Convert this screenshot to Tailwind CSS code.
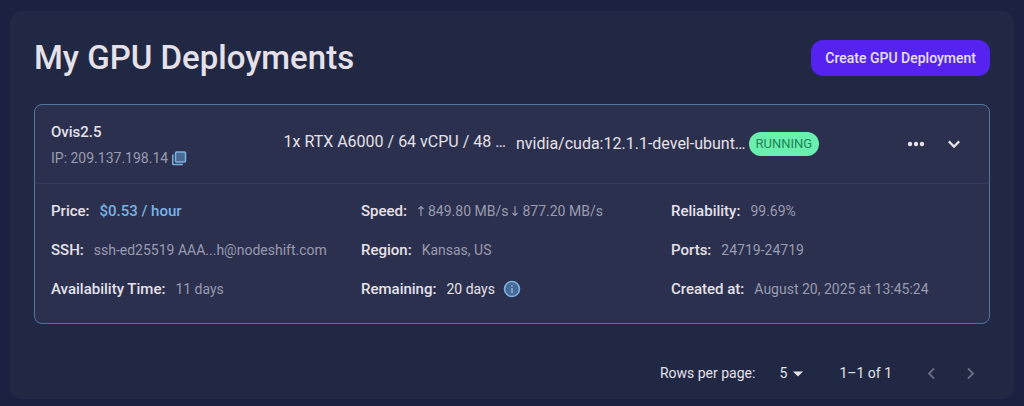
<!DOCTYPE html>
<html lang="en">
<head>
    <meta charset="UTF-8">
    <meta name="viewport" content="width=device-width, initial-scale=1.0">
    <title>My GPU Deployments</title>
    <script src="https://cdn.jsdelivr.net/npm/@tailwindcss/browser@4"></script>
</head>
<body class="min-h-screen bg-[#1b2140] px-[10px] pt-[11px] pb-[7px] font-['Roboto',sans-serif] text-[#e6e1e9]">
    <main class="rounded-xl bg-[#212843] px-6 pt-[29px] pb-[6px]">
        <header class="flex items-center justify-between">
            <h1 class="text-[33px] leading-9 font-medium">My GPU Deployments</h1>
            <button type="button" class="h-9 rounded-xl bg-[#5522f0] px-[14px] text-[14px] font-medium">Create GPU Deployment</button>
        </header>

        <section class="mt-7 rounded-lg border border-[#52759f] bg-[#2a304e]">
            <div class="grid grid-cols-4 items-center gap-2 border-b border-[#373d5d] px-4 py-[13px]">
                <div>
                    <h2 class="text-[15px] leading-7 font-medium">Ovis2.5</h2>
                    <p class="flex items-center gap-0.5 text-[14px] leading-6 text-[#9a9bb0]">
                        IP: 209.137.198.14
                        <button type="button" aria-label="Copy IP address">
                            <svg class="size-[18px]" viewBox="0 0 18 18" fill="none" stroke="#7ab3e3" stroke-width="1.5">
                                <rect x="5.5" y="3" width="10" height="10" rx="1" fill="#4b6a93"/>
                                <path d="M2.8 5.5v9.2q0 .8.8.8H13"/>
                            </svg>
                        </button>
                    </p>
                </div>
                <p class="pb-1 text-[16px] whitespace-nowrap">1x RTX A6000 / 64 vCPU / 48 …</p>
                <p class="text-[16px] whitespace-nowrap">nvidia/cuda:12.1.1-devel-ubunt…</p>
                <div class="flex items-center justify-between">
                    <span class="rounded-full bg-[#69f0ae] px-[7px] text-[13px] leading-6 text-[#218456]">RUNNING</span>
                    <div class="flex items-center">
                        <button type="button" aria-label="More actions" class="p-2">
                            <svg class="size-[22px]" viewBox="0 0 22 22" fill="currentColor">
                                <circle cx="5" cy="11" r="2.2"/>
                                <circle cx="11" cy="11" r="2.2"/>
                                <circle cx="17" cy="11" r="2.2"/>
                            </svg>
                        </button>
                        <button type="button" aria-label="Collapse details" class="p-2">
                            <svg class="size-[22px]" viewBox="0 0 22 22" fill="none" stroke="currentColor" stroke-width="2.2">
                                <path d="M5.8 8.4 11 13.6l5.2-5.2"/>
                            </svg>
                        </button>
                    </div>
                </div>
            </div>

            <dl class="grid grid-cols-3 gap-x-2 gap-y-[15px] px-4 pt-[15px] pb-[22px] text-[14px] leading-6 text-[#9a9bb0]">
                <div class="flex gap-[10px]">
                    <dt class="text-[15px] font-medium text-[#e6e1e9]">Price:</dt>
                    <dd class="text-[15px] font-medium text-[#7ab3e3]">$0.53 / hour</dd>
                </div>
                <div class="flex gap-[10px]">
                    <dt class="text-[15px] font-medium text-[#e6e1e9]">Speed:</dt>
                    <dd class="flex items-center gap-[3px]">
                        <svg class="h-3 w-2" viewBox="0 0 8 12" fill="none" stroke="currentColor" stroke-width="1.2"><path d="M4 11V1.5M1.5 4 4 1.5 6.5 4"/></svg>
                        849.80 MB/s
                        <svg class="h-3 w-2" viewBox="0 0 8 12" fill="none" stroke="currentColor" stroke-width="1.2"><path d="M4 1v9.5M1.5 8 4 10.5 6.5 8"/></svg>
                        877.20 MB/s
                    </dd>
                </div>
                <div class="flex gap-[10px]">
                    <dt class="text-[15px] font-medium text-[#e6e1e9]">Reliability:</dt>
                    <dd>99.69%</dd>
                </div>
                <div class="flex gap-[10px]">
                    <dt class="text-[15px] font-medium text-[#e6e1e9]">SSH:</dt>
                    <dd>ssh-ed25519 AAA...h@nodeshift.com</dd>
                </div>
                <div class="flex gap-[10px]">
                    <dt class="text-[15px] font-medium text-[#e6e1e9]">Region:</dt>
                    <dd>Kansas, US</dd>
                </div>
                <div class="flex gap-[10px]">
                    <dt class="text-[15px] font-medium text-[#e6e1e9]">Ports:</dt>
                    <dd>24719-24719</dd>
                </div>
                <div class="flex gap-[10px]">
                    <dt class="text-[15px] font-medium text-[#e6e1e9]">Availability Time:</dt>
                    <dd>11 days</dd>
                </div>
                <div class="flex gap-[10px]">
                    <dt class="text-[15px] font-medium text-[#e6e1e9]">Remaining:</dt>
                    <dd class="flex items-center gap-2 text-[#e6e1e9]">
                        20 days
                        <svg class="size-[18px]" viewBox="0 0 18 18" fill="none" stroke="#7ab3e3">
                            <circle cx="9" cy="9" r="7.5" fill="#4b6a93" stroke-width="1.6"/>
                            <path d="M9 8v5M9 5v1.6" stroke-width="1.6"/>
                        </svg>
                    </dd>
                </div>
                <div class="flex gap-[10px]">
                    <dt class="text-[15px] font-medium text-[#e6e1e9]">Created at:</dt>
                    <dd>August 20, 2025 at 13:45:24</dd>
                </div>
            </dl>
        </section>

        <nav aria-label="Pagination" class="mt-[30px] flex items-center justify-end text-[14px]">
            <label for="rows">Rows per page:</label>
            <div class="ml-4 grid items-center">
                <select id="rows" class="col-start-1 row-start-1 w-9 appearance-none pl-2">
                    <option>5</option>
                    <option>10</option>
                    <option>25</option>
                </select>
                <svg class="pointer-events-none col-start-1 row-start-1 ml-[22px] h-[6px] w-[10px]" viewBox="0 0 10 6" fill="currentColor"><path d="M0 .5h10L5 5.5z"/></svg>
            </div>
            <span class="ml-8">1–1 of 1</span>
            <button type="button" disabled aria-label="Previous page" class="ml-5 p-2 text-[#6c6e87]">
                <svg class="size-[23px]" viewBox="0 0 24 24" fill="currentColor"><path d="M15.41 7.41 14 6l-6 6 6 6 1.41-1.41L10.83 12z"/></svg>
            </button>
            <button type="button" disabled aria-label="Next page" class="p-2 text-[#6c6e87]">
                <svg class="size-[23px]" viewBox="0 0 24 24" fill="currentColor"><path d="M10 6 8.59 7.41 13.17 12l-4.58 4.59L10 18l6-6z"/></svg>
            </button>
        </nav>
    </main>
</body>
</html>
